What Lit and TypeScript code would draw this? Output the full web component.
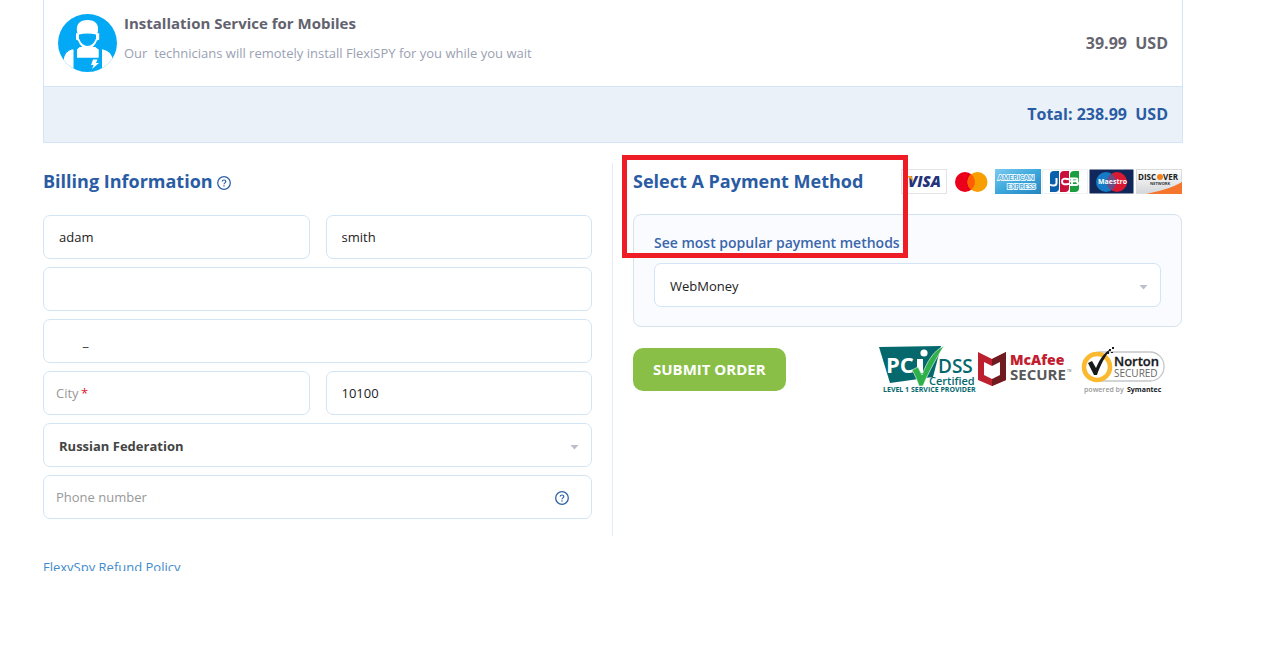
import { LitElement, html, css, svg } from "lit";
import { customElement } from "lit/decorators.js";

@customElement("help-icon")
class HelpIcon extends LitElement {
  static styles = css`
    :host { display: inline-flex; }
    .icon { display: block; width: 14px; height: 14px; }
  `;
  render() {
    return html`<svg class="icon" viewBox="0 0 14 14" fill="none" stroke="#2f62a8">
      <circle cx="7" cy="7" r="6.3" stroke-width="1.3" />
      <path d="M5.200 5.600C5.200 4.500 5.900 4 7 4s1.800.6 1.800 1.500c0 1.300-1.800 1.400-1.800 2.700" stroke-width="1.2" />
      <path d="M7 9.200v1.300" stroke-width="1.3" />
    </svg>`;
  }
}

const cards = [
  { name: "Visa", art: svg`
    <rect x=".5" y=".5" width="45" height="24" fill="#fff" stroke="#e3e3e6"/>
    <text x="7" y="18" font-size="15" font-weight="800" font-style="italic" fill="#26337a">VISA</text>
    <path d="M5.500 7h5l2 6-2.500-3z" fill="#f79d1c"/>` },
  { name: "Mastercard", art: svg`
    <circle cx="17" cy="13" r="10" fill="#eb001b"/>
    <circle cx="29.5" cy="13" r="10" fill="#f79e00"/>
    <path d="M23.2 5.2a10 10 0 0 1 0 15.6a10 10 0 0 1 0-15.6z" fill="#ff5f00"/>` },
  { name: "American Express", art: svg`
    <defs><linearGradient id="ax" x1="0" y1="0" x2="1" y2="1"><stop offset="0" stop-color="#7ccaf0"/><stop offset=".5" stop-color="#3ca7dc"/><stop offset="1" stop-color="#2585bf"/></linearGradient></defs>
    <rect width="46" height="25" fill="url(#ax)"/>
    <g font-size="7" font-weight="600" fill="#3d9fd4" stroke="#e9f7ff" stroke-width="1.8" paint-order="stroke">
      <text x="3" y="11">AMERICAN</text><text x="12" y="20">EXPRESS</text></g>` },
  { name: "JCB", art: svg`
    <rect x=".5" y=".5" width="45" height="24" fill="#fff" stroke="#eef0f3"/>
    <path d="M8 23V6q0-4 4-4h5v17q0 4-4 4z" fill="#0b60ad"/>
    <path d="M18 23V6q0-4 4-4h5v17q0 4-4 4z" fill="#c8123c"/>
    <path d="M28 23V6q0-4 4-4h5v17q0 4-4 4z" fill="#1a9e3f"/>
    <g fill="none" stroke="#fff" stroke-width="2">
      <path d="M14.500 9v5q0 2.500-3 2.500-2 0-3.500-1"/>
      <path d="M27 10.200q-7-1.800-7 2.300t7 2.300"/>
      <path d="M28 9.500h6q1.500 0 1.500 1.300t-1.500 1.500h-6M34 12.500q2 .2 2 1.800t-2 1.700h-6M30 9v7"/>
    </g>` },
  { name: "Maestro", art: svg`
    <rect x=".5" y=".5" width="44" height="24" fill="#11275a"/>
    <circle cx="17" cy="13" r="10" fill="#167bc6"/>
    <circle cx="28" cy="13" r="10" fill="#d91a32"/>
    <path d="M22.500 4.700a10 10 0 0 1 0 16.600a10 10 0 0 1 0-16.600z" fill="#6a4b83"/>
    <text x="9" y="15" font-size="7" font-weight="700" fill="#fff">Maestro</text>` },
  { name: "Discover", art: svg`
    <defs><linearGradient id="dg" x1="0" y1="0" x2="0" y2="1"><stop offset="0" stop-color="#fff"/><stop offset="1" stop-color="#d5d6da"/></linearGradient></defs>
    <rect x=".5" y=".5" width="45" height="24" fill="url(#dg)" stroke="#dcdcdf"/>
    <path d="M10 25C25 22 38 18 46 13v12z" fill="#f5752c"/>
    <text x="2" y="11" font-size="8" font-weight="700" fill="#222">DISC</text>
    <circle cx="24" cy="8" r="3" fill="#f08020"/>
    <text x="27" y="11" font-size="8" font-weight="700" fill="#222">VER</text>
    <text x="14" y="16" font-size="4" font-weight="700" fill="#333">NETWORK</text>` },
];

@customElement("card-logos")
class CardLogos extends LitElement {
  static styles = css`
    :host { display: flex; gap: 1px; font-family: "Open Sans", sans-serif; }
    .card { display: block; width: 46px; height: 25px; }
  `;
  render() {
    return cards.map((c) => html`<svg class="card" viewBox="0 0 46 25" role="img" aria-label=${c.name}>${c.art}</svg>`);
  }
}

@customElement("trust-badges")
class TrustBadges extends LitElement {
  static styles = css`
    :host { display: block; font-family: "Open Sans", sans-serif; }
    .badges { display: block; width: 290px; height: 50px; overflow: visible; }
  `;
  render() {
    return html`<svg class="badges" viewBox="0 0 290 50" role="img" aria-label="Security certificates">
      <path d="M0 -1L62 -2L54 29L11 35z" fill="#04686d"/>
      <text x="7" y="25" font-size="22" font-weight="700" fill="#fff">PC</text>
      <path d="M38 11h6v14h-6z" fill="#fff"/>
      <circle cx="45" cy="5" r="3.6" fill="#fff"/>
      <text x="59" y="25" font-size="19" font-weight="600" fill="#04686d">DSS</text>
      <path d="M33 22l6-3l4 8C48 14 54 3 65 -2C58 9 50 23 44 38h-4C38 32 36 27 33 22z" fill="#2fb14a" stroke="#fff" stroke-width=".6"/>
      <text x="50" y="37" font-size="11" font-weight="600" fill="#04686d">Certified</text>
      <text x="4" y="44" font-size="7" font-weight="700" fill="#04686d">LEVEL 1 SERVICE PROVIDER</text>

      <path d="M99 4L113 11L127 4V32L113 38L99 32z" fill="#bd202e"/>
      <path d="M127 4L113 11V38L127 32z" fill="#6f1b20"/>
      <path d="M105 14L113 18L121 14V27L113 31L105 27z" fill="#fff"/>
      <text x="131" y="17" font-size="14" font-weight="800" fill="#c0202f">McAfee</text>
      <text x="131" y="32" font-size="15" font-weight="700" fill="#58595b">SECURE</text>
      <text x="188" y="24" font-size="3" fill="#58595b">TM</text>

      <rect x="208" y="4" width="77" height="29" rx="14" fill="#fff" stroke="#c4c6c8" stroke-width="1.3"/>
      <circle cx="218" cy="19" r="13" fill="#fff" stroke="#fbb92f" stroke-width="4.600"/>
      <path d="M209 15l4-2l4 7C221 10 226 4 232 1C226 8 221 18 218 27h-3z" fill="#17191b"/>
      <path d="M230 1h2v2h-2zM233 -1h2v2h-2zM228 4h2v2h-2zM232 4h2v1h-2z" fill="#17191b"/>
      <text x="235" y="18" font-size="13" font-weight="600" fill="#17191b" stroke="#17191b" stroke-width=".3">Norton</text>
      <text x="235" y="29" font-size="10" fill="#666">SECURED</text>
      <text x="205" y="44" font-size="7" font-weight="600" fill="#999">powered by</text>
      <text x="248" y="44" font-size="7" font-weight="700" fill="#17191b">Symantec</text>
    </svg>`;
  }
}

@customElement("app-root")
class AppRoot extends LitElement {
  static styles = css`
    :host {
      display: block;
      padding: 0 90px 0 43px;
      font: 13px/20px "Open Sans", sans-serif;
      color: #333;
      background: #fff;
    }
    *, *::before { box-sizing: border-box; }
    .order { width: 100%; border-collapse: separate; border-spacing: 0; border: 1px solid #d3e5f5; border-top: 0; }
    .order td { padding: 0 14px; border-bottom: 1px solid #d3e5f5; }
    .item td { height: 87px; }
    .order .total td { height: 55px; padding-bottom: 1px; border-bottom: 0; background: #eaf1f9; color: #2a5ca4; }
    .amount { text-align: right; font-size: 16px; font-weight: 700; color: #65656f; white-space: pre; }
    .product { display: flex; gap: 7px; align-items: center; }
    .avatar { display: block; width: 59px; height: 58px; }
    .product-text { display: grid; gap: 10px; padding-bottom: 11px; }
    .product-name { font-size: 15px; font-weight: 700; color: #62626e; }
    .product-note { color: #9aa1b2; white-space: pre; }
    .columns { display: grid; grid-template-columns: 1fr 1px 1fr; gap: 20px; margin: 20px 1px 0 0; }
    .divider { background: #e3ecf8; }
    .billing { padding-bottom: 17px; }
    .heading { display: flex; align-items: center; gap: 4px; height: 36px; }
    .title { margin: 0; font-size: 18px; line-height: 36px; font-weight: 700; color: #2a5ca4; white-space: nowrap; }
    .title-icon { margin-top: 3px; }
    .fields { display: grid; grid-template-columns: 1fr 1fr; gap: 8px 16px; margin-top: 16px; }
    .wide { grid-column: 1 / -1; }
    .field { display: grid; align-items: center; min-width: 0; }
    .field > * { grid-area: 1 / 1; }
    .box {
      width: 100%; height: 44px; margin: 0; padding: 0 15px;
      border: 1px solid #d3e5f5; border-radius: 7px; background: #fff;
      font: inherit; color: #222; appearance: none; outline: none;
    }
    select.box { padding-top: 2px; }
    .box.bold { font-weight: 700; color: #444; }
    .hint { padding-left: 13px; color: #999; pointer-events: none; }
    .required { margin-left: -1px; color: #d9221c; }
    .inner-icon { justify-self: end; margin: 2px 23px 0 0; }
    .arrow { justify-self: end; width: 9px; height: 5px; margin: 4px 13px 0 0; background: #bcc0cb; clip-path: polygon(0 0, 100% 0, 50% 100%); pointer-events: none; }
    .payment { position: relative; }
    .payment .heading { justify-content: space-between; }
    .panel { margin-top: 15px; padding: 18px 20px 19px; border: 1px solid #d6e2ef; border-radius: 8px; background: #f9fbff; }
    .panel-label { display: block; margin-bottom: 10px; font-size: 14px; font-weight: 600; color: #3a66ab; }
    .actions { display: flex; justify-content: space-between; align-items: flex-start; margin-top: 21px; padding-right: 13px; }
    .submit { height: 43px; padding: 0 20px 2px; border: 0; border-radius: 10px; background: #89bf47; color: #fff; font: 700 15px/20px "Open Sans", sans-serif; }
    .highlight { position: absolute; left: -11px; top: -8px; width: 286px; height: 103px; border: 5px solid #ee1c24; pointer-events: none; }
    .footer { height: 35px; padding-top: 21px; overflow: hidden; }
    .link { color: #428bca; text-decoration: none; }
  `;

  render() {
    return html`
      <table class="order">
        <tr class="item">
          <td>
            <div class="product">
              <svg class="avatar" viewBox="0 0 59 58" aria-hidden="true">
                <defs><clipPath id="disc"><ellipse cx="29.5" cy="29" rx="29.5" ry="29"/></clipPath></defs>
                <g clip-path="url(#disc)">
                  <rect width="59" height="58" fill="#03a9f4"/>
                  <path d="M0 58V46H5.500Q7 37 14 35.500H19L22 33H37L40 35.500H45Q53 37 55 46H59V58z" fill="#fff"/>
                  <path d="M15.500 35L19 34V43.500H40.500V34L44 35V58H15.500z" fill="#03a9f4"/>
                  <path d="M19 35.500L22 33Q29.500 38 37 33L40.500 35.500V43.500H19z" fill="#fff"/>
                  <path d="M19.500 19.500C17 10 22 6 29.500 6S42 10 39.500 19.500L41.200 19V25.500L39 26.500Q36 34.500 29.500 34.500T20 26.500L18 25.500V19z" fill="#fff"/>
                  <path d="M21 20.500Q29.500 18.500 38 20.500V24.500Q35 32 29.500 32T21 24.500z" fill="#03a9f4"/>
                  <path d="M35 45.500h4.500l-1.500 3.500h3l-7 6 1.500-4h-2.500z" fill="#fff"/>
                </g>
              </svg>
              <div class="product-text">
                <div class="product-name">Installation Service for Mobiles</div>
                <div class="product-note">Our  technicians will remotely install FlexiSPY for you while you wait</div>
              </div>
            </div>
          </td>
          <td class="amount">39.99  USD</td>
        </tr>
        <tr class="total">
          <td class="amount" colspan="2">Total: 238.99  USD</td>
        </tr>
      </table>

      <div class="columns">
        <section class="billing">
          <div class="heading"><h2 class="title">Billing Information</h2><help-icon class="title-icon"></help-icon></div>
          <div class="fields">
            <div class="field"><input class="box" aria-label="First name" .value=${"adam"} /></div>
            <div class="field"><input class="box" aria-label="Last name" .value=${"smith"} /></div>
            <div class="field wide"><input class="box" aria-label="Email" /></div>
            <div class="field wide"><input class="box" aria-label="Address" .value=${"       _"} /></div>
            <div class="field"><input class="box" id="city" /><label class="hint" for="city">City <span class="required">*</span></label></div>
            <div class="field"><input class="box" aria-label="Postal code" .value=${"10100"} /></div>
            <div class="field wide">
              <select class="box bold" aria-label="Country"><option>Russian Federation</option></select>
              <span class="arrow"></span>
            </div>
            <div class="field wide">
              <input class="box" id="phone" type="tel" /><label class="hint" for="phone">Phone number</label>
              <help-icon class="inner-icon"></help-icon>
            </div>
          </div>
        </section>
        <div class="divider"></div>
        <section class="payment">
          <div class="heading"><h2 class="title">Select A Payment Method</h2><card-logos></card-logos></div>
          <div class="panel">
            <label class="panel-label" for="method">See most popular payment methods</label>
            <div class="field">
              <select class="box" id="method"><option>WebMoney</option></select>
              <span class="arrow"></span>
            </div>
          </div>
          <div class="actions">
            <button class="submit" type="button">SUBMIT ORDER</button>
            <trust-badges></trust-badges>
          </div>
          <div class="highlight"></div>
        </section>
      </div>
      <footer class="footer"><a class="link" href="#refund">FlexySpy Refund Policy</a></footer>
    `;
  }
}
